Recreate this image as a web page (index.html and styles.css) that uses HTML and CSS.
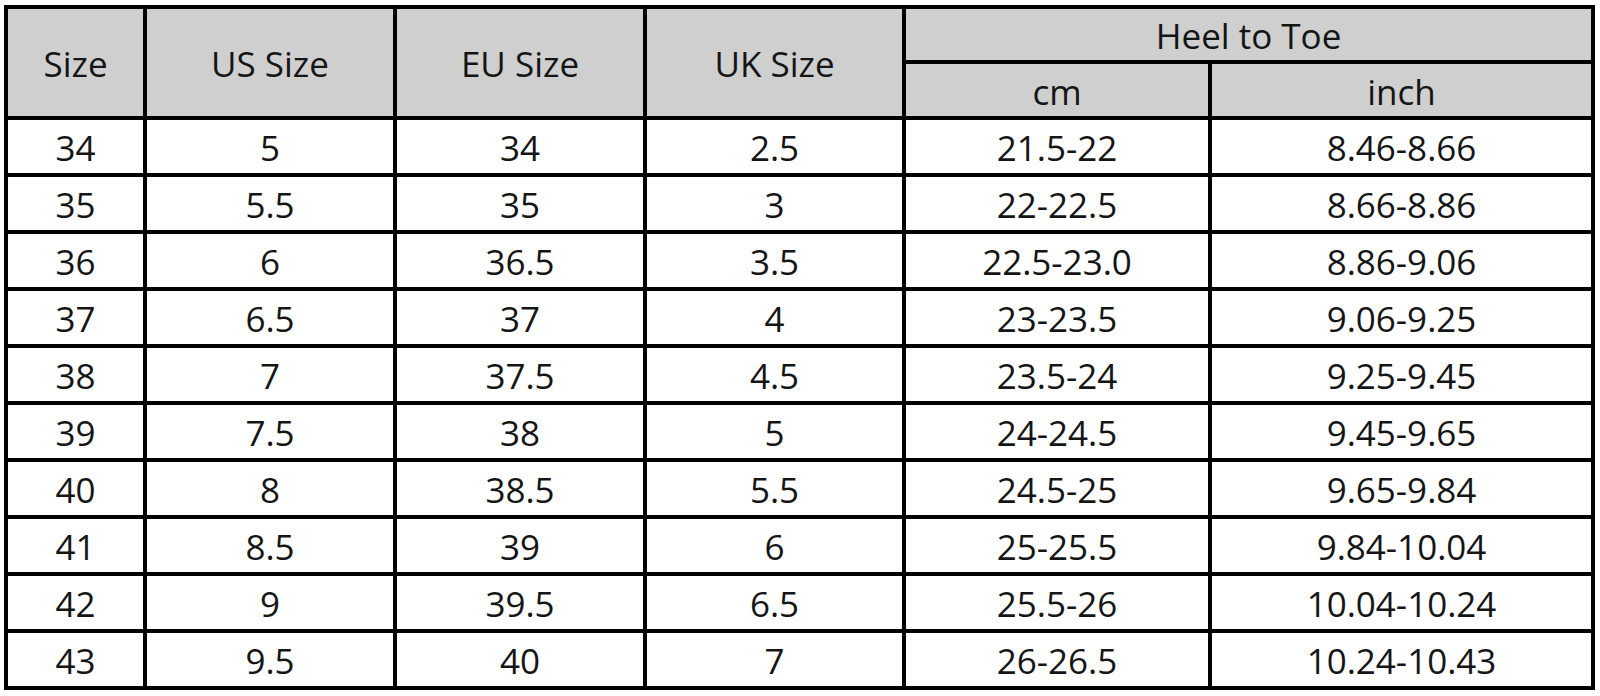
FILE: index.html
```html
<!DOCTYPE html>
<html>
<head>
<meta charset="utf-8">
<link rel="stylesheet" href="styles.css">
</head>
<body>
<div class="chart">
  <div class="c h span2">Size</div>
  <div class="c h span2">US Size</div>
  <div class="c h span2">EU Size</div>
  <div class="c h span2">UK Size</div>
  <div class="c h heel">Heel to Toe</div>
  <div class="c h">cm</div>
  <div class="c h">inch</div>

  <div class="c">34</div><div class="c">5</div><div class="c">34</div><div class="c">2.5</div><div class="c">21.5-22</div><div class="c">8.46-8.66</div>
  <div class="c">35</div><div class="c">5.5</div><div class="c">35</div><div class="c">3</div><div class="c">22-22.5</div><div class="c">8.66-8.86</div>
  <div class="c">36</div><div class="c">6</div><div class="c">36.5</div><div class="c">3.5</div><div class="c">22.5-23.0</div><div class="c">8.86-9.06</div>
  <div class="c">37</div><div class="c">6.5</div><div class="c">37</div><div class="c">4</div><div class="c">23-23.5</div><div class="c">9.06-9.25</div>
  <div class="c">38</div><div class="c">7</div><div class="c">37.5</div><div class="c">4.5</div><div class="c">23.5-24</div><div class="c">9.25-9.45</div>
  <div class="c">39</div><div class="c">7.5</div><div class="c">38</div><div class="c">5</div><div class="c">24-24.5</div><div class="c">9.45-9.65</div>
  <div class="c">40</div><div class="c">8</div><div class="c">38.5</div><div class="c">5.5</div><div class="c">24.5-25</div><div class="c">9.65-9.84</div>
  <div class="c">41</div><div class="c">8.5</div><div class="c">39</div><div class="c">6</div><div class="c">25-25.5</div><div class="c">9.84-10.04</div>
  <div class="c">42</div><div class="c">9</div><div class="c">39.5</div><div class="c">6.5</div><div class="c">25.5-26</div><div class="c">10.04-10.24</div>
  <div class="c">43</div><div class="c">9.5</div><div class="c">40</div><div class="c">7</div><div class="c">26-26.5</div><div class="c">10.24-10.43</div>
</div>
</body>
</html>
```

FILE: styles.css
```css
html, body {
  margin: 0;
  padding: 0;
  background: #ffffff;
}
body {
  padding: 5px 0 0 4px;
}
.chart {
  display: grid;
  grid-template-columns: 139px 250px 250px 259px 306px 383px;
  grid-template-rows: 55px 56px repeat(10, 57px);
  width: max-content;
  border-left: 4px solid #000;
  border-top: 4px solid #000;
  font-family: "Open Sans", "Noto Sans", sans-serif;
  font-size: 35px;
  color: #151515;
}
.c {
  box-sizing: border-box;
  border-right: 4px solid #000;
  border-bottom: 4px solid #000;
  display: flex;
  align-items: center;
  justify-content: center;
  line-height: 1;
  padding-top: 2px;
}
.h {
  background: #cfcfcf;
}
.span2 {
  grid-row: span 2;
}
.heel {
  grid-column: span 2;
}
```
